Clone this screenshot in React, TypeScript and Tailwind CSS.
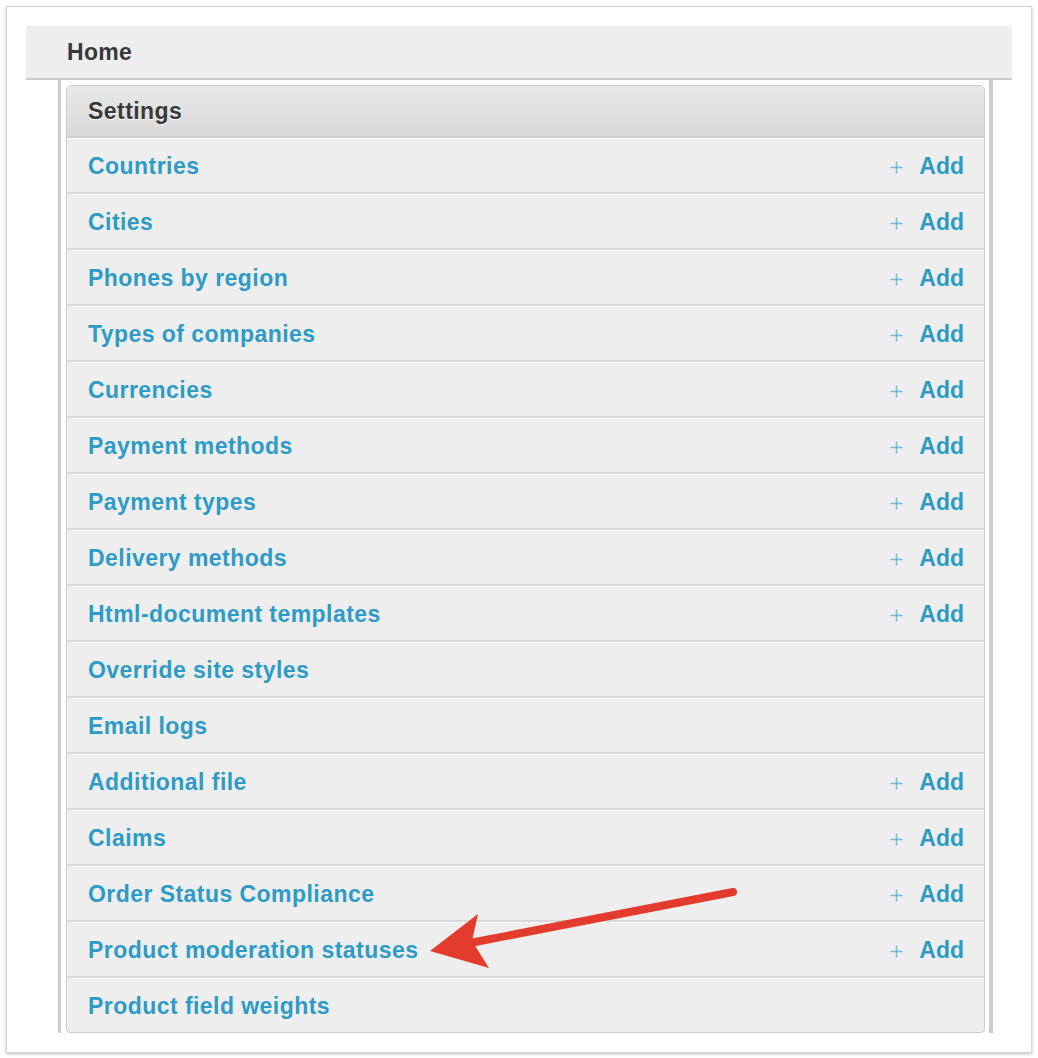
import React from 'react';

interface SettingRow {
  label: string;
  canAdd: boolean;
}

const rows: SettingRow[] = [
  { label: 'Countries', canAdd: true },
  { label: 'Cities', canAdd: true },
  { label: 'Phones by region', canAdd: true },
  { label: 'Types of companies', canAdd: true },
  { label: 'Currencies', canAdd: true },
  { label: 'Payment methods', canAdd: true },
  { label: 'Payment types', canAdd: true },
  { label: 'Delivery methods', canAdd: true },
  { label: 'Html-document templates', canAdd: true },
  { label: 'Override site styles', canAdd: false },
  { label: 'Email logs', canAdd: false },
  { label: 'Additional file', canAdd: true },
  { label: 'Claims', canAdd: true },
  { label: 'Order Status Compliance', canAdd: true },
  { label: 'Product moderation statuses', canAdd: true },
  { label: 'Product field weights', canAdd: false },
];

const PlusIcon: React.FC = () => (
  <svg width="13" height="13" viewBox="0 0 13 13" className="mr-[16px] mt-[1px]">
    <path d="M6.5 0.5v12M0.5 6.5h12" stroke="#7ab7d0" strokeWidth="1.5" fill="none" />
  </svg>
);

const App: React.FC = () => {
  return (
    <div className="relative bg-white p-[6px] font-['Liberation_Sans',Arial,sans-serif]">
      <div className="border border-[#d6d6d6] bg-white px-[19px] pt-[19px] pb-[19px] shadow-[0_1px_3px_rgba(0,0,0,0.25)]">
        {/* breadcrumb bar */}
        <div className="flex h-[54px] items-center border-b-2 border-[#cccccc] bg-[#eeeeee] pl-[41px] text-[23px] font-bold tracking-[0.3px] text-[#383838]">
          Home
        </div>

        <div className="ml-[32px] mr-[19px] border-l-[3px] border-r-[4px] border-[#cccccc] pt-[5px] pl-[5px] pr-[4px]">
          <div className="overflow-hidden rounded-t-[5px] rounded-b-[4px] border border-[#cccccc] bg-[#eeeeee]">
            <div className="flex h-[52px] items-center border-b-2 border-[#d2d2d2] bg-gradient-to-b from-[#e8e8e8] to-[#dadada] pl-[21px] text-[23px] font-bold tracking-[0.45px] text-[#383838] [text-shadow:0_1px_0_#ffffff]">
              Settings
            </div>
            {rows.map((row, i) => {
              const last = i === rows.length - 1;
              return (
                <div
                  key={row.label}
                  className={
                    'flex items-center justify-between border-t border-white pt-[2px] pl-[21px] pr-[20px] text-[23px] font-bold text-[#2d9bc5] ' +
                    (last ? 'h-[54px]' : 'h-[56px] border-b-2 border-b-[#d8d8d8]')
                  }
                >
                  <span className="tracking-[0.45px]">{row.label}</span>
                  {row.canAdd && (
                    <span className="flex items-center">
                      <PlusIcon />
                      <span>Add</span>
                    </span>
                  )}
                </div>
              );
            })}
          </div>
        </div>
      </div>

      {/* annotation arrow */}
      <svg className="pointer-events-none absolute left-0 top-0" width="1038" height="1058" viewBox="0 0 1038 1058">
        <line x1="733" y1="892" x2="470" y2="943" stroke="#e43b2f" strokeWidth="8" strokeLinecap="round" />
        <polygon points="430,951 478,914 472,941 489,968" fill="#e43b2f" />
      </svg>
    </div>
  );
};

export default App;
